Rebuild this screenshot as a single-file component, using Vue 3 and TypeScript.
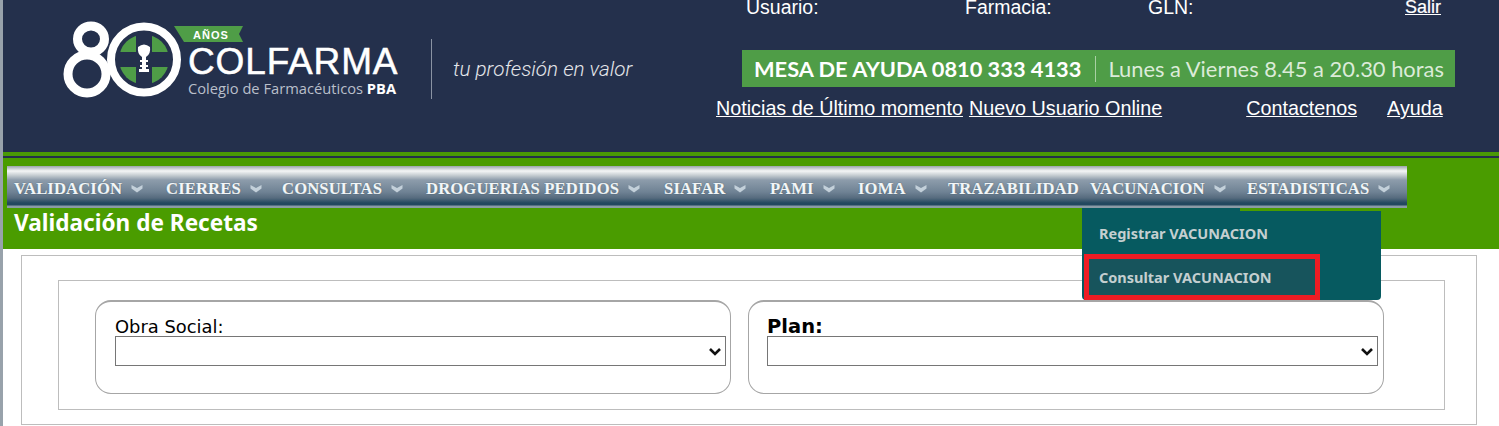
<script setup lang="ts">
interface NavItem {
  label: string
  arrow: boolean
  width: number
}

const navItems: NavItem[] = [
  { label: 'VALIDACIÓN', arrow: true, width: 152 },
  { label: 'CIERRES', arrow: true, width: 116 },
  { label: 'CONSULTAS', arrow: true, width: 144 },
  { label: 'DROGUERIAS PEDIDOS', arrow: true, width: 238 },
  { label: 'SIAFAR', arrow: true, width: 106 },
  { label: 'PAMI', arrow: true, width: 88 },
  { label: 'IOMA', arrow: true, width: 90 },
  { label: 'TRAZABILIDAD', arrow: false, width: 142 },
  { label: 'VACUNACION', arrow: true, width: 157 },
  { label: 'ESTADISTICAS', arrow: true, width: 153 }
]
</script>

<template>
  <div class="page">
    <header class="top">
      <div class="brand">
        <svg class="mark" width="190" height="90" viewBox="60 15 190 90" aria-hidden="true">
          <defs>
            <clipPath id="cross-clip">
              <circle cx="144" cy="59.5" r="25" />
            </clipPath>
          </defs>
          <ellipse cx="91" cy="39" rx="13.5" ry="13" fill="none" stroke="#fff" stroke-width="9" />
          <ellipse cx="87" cy="74" rx="19" ry="19" fill="none" stroke="#fff" stroke-width="9" />
          <circle cx="144" cy="59.5" r="33" fill="#24304c" stroke="#fff" stroke-width="8" />
          <g clip-path="url(#cross-clip)" fill="#4f9d47">
            <rect x="116" y="32" width="20" height="20" />
            <rect x="152" y="32" width="20" height="20" />
            <rect x="116" y="67" width="20" height="20" />
            <rect x="152" y="67" width="20" height="20" />
          </g>
          <path d="M138 47q6-5 12 0q1 7-4 10v3h2v2h-2v3h2v2h-2v2h3v3h-10v-3h3v-2h-2v-2h2v-3h-2v-2h2v-3q-5-3-4-10z" fill="#fff" />
          <path d="M174 26h69l-4 8 4 8h-59z" fill="#4f9d47" />
          <text x="193" y="39" class="anos">AÑOS</text>
        </svg>
        <div class="wordmark">
          <div class="name">COLFARMA</div>
          <div class="sub">Colegio de Farmacéuticos <b>PBA</b></div>
        </div>
        <div class="divider"></div>
        <div class="slogan">tu profesión en valor</div>
      </div>

      <div class="account">
        <div class="user-row">
          <span class="user-usuario">Usuario:</span>
          <span class="user-farmacia">Farmacia:</span>
          <span class="user-gln">GLN:</span>
          <a class="salir">Salir</a>
        </div>
        <div class="help">
          <b>MESA DE AYUDA 0810 333 4133</b>
          <i class="help-sep"></i>
          <span>Lunes a Viernes 8.45 a 20.30 horas</span>
        </div>
        <div class="links">
          <a>Noticias de Último momento</a>
          <a class="link-nuevo">Nuevo Usuario Online</a>
          <a class="link-contacto">Contactenos</a>
          <a class="link-ayuda">Ayuda</a>
        </div>
      </div>
    </header>

    <main class="body">
      <nav class="nav">
        <div
          v-for="item in navItems"
          :key="item.label"
          class="nav-item"
          :style="{ width: item.width + 'px' }"
        >
          <span>{{ item.label }}</span>
          <svg v-if="item.arrow" class="caret" width="12" height="9" viewBox="0 0 12 9">
            <path d="M0.5 1l5.5 3 5.5-3v3.5l-5.5 4-5.5-4z" fill="#c3d0da" />
          </svg>
          <div v-if="item.label === 'VACUNACION'" class="menu">
            <div class="menu-row">Registrar VACUNACION</div>
            <div class="menu-row marked">Consultar VACUNACION</div>
          </div>
        </div>
      </nav>
      <h1 class="title">Validación de Recetas</h1>

      <section class="content">
        <div class="outer">
          <div class="inner">
            <div class="panel panel-obra">
              <label class="lbl-obra">Obra Social:</label>
              <div class="select-box">
                <select></select>
                <svg class="chevron" width="14" height="10" viewBox="0 0 14 10">
                  <path d="M2 2l5 5 5-5" fill="none" stroke="#111" stroke-width="2.6" />
                </svg>
              </div>
            </div>
            <div class="panel panel-plan">
              <label class="lbl-plan">Plan:</label>
              <div class="select-box">
                <select></select>
                <svg class="chevron" width="14" height="10" viewBox="0 0 14 10">
                  <path d="M2 2l5 5 5-5" fill="none" stroke="#111" stroke-width="2.6" />
                </svg>
              </div>
            </div>
          </div>
        </div>
      </section>
    </main>
  </div>
</template>

<style>
html,
body {
  margin: 0;
  overflow: hidden;
  background: #fff;
}
</style>

<style scoped>
.page {
  width: 1499px;
  height: 426px;
  overflow: hidden;
  box-sizing: border-box;
  border-left: 3px solid #98a2ab;
  font-family: "Liberation Sans", Arial, sans-serif;
}

.top {
  height: 152px;
  background: #24304c;
  display: flex;
  color: #fff;
}

.brand {
  width: 713px;
  display: flex;
  align-items: flex-start;
  padding-left: 57px;
  box-sizing: border-box;
}

.mark {
  margin-top: 15px;
  flex: none;
}

.anos {
  font: bold 11px "Liberation Sans", sans-serif;
  letter-spacing: 1px;
  fill: #fff;
}

.wordmark {
  margin-left: -62px;
  margin-top: 43px;
  flex: none;
  width: 212px;
}

.name {
  font-size: 37px;
  line-height: 38px;
  letter-spacing: 0.85px;
  -webkit-text-stroke: 0.5px #fff;
}

.sub {
  font-family: "Open Sans", sans-serif;
  font-size: 14.7px;
  line-height: 14px;
  color: #b9bfca;
  white-space: nowrap;
}

.sub b {
  color: #fff;
}

.divider {
  width: 1px;
  height: 60px;
  margin: 39px 0 0 31px;
  background: #8a93a3;
  flex: none;
}

.slogan {
  margin: 57px 0 0 21px;
  font-family: Roboto, sans-serif;
  font-style: italic;
  font-weight: 300;
  font-size: 20.7px;
  line-height: 24px;
  color: #e4e6ea;
  white-space: nowrap;
}

.account {
  flex: 1;
}

.user-row {
  height: 50px;
  display: flex;
  align-items: flex-start;
  line-height: 14px;
  font-size: 19.5px;
  white-space: nowrap;
}

.user-usuario {
  margin-left: 30px;
  width: 219px;
}

.user-farmacia {
  width: 183px;
}

.user-gln {
  width: 257px;
}

.salir {
  font-size: 18px;
  -webkit-text-stroke: 0.2px #fff;
  text-decoration: underline;
}

.help {
  width: 713px;
  height: 37px;
  margin-left: 26px;
  padding-left: 12px;
  box-sizing: border-box;
  background: #4f9d47;
  display: flex;
  align-items: center;
  font-family: Lato, sans-serif;
  white-space: nowrap;
}

.help b {
  font-size: 21.8px;
}

.help span {
  font-size: 21.9px;
  color: #dcebd9;
}

.help-sep {
  width: 1px;
  height: 26px;
  margin: 0 12px 0 14px;
  background: #a9d0a4;
}

.links {
  display: flex;
  margin-top: 10px;
  font-size: 19.75px;
  line-height: 22px;
  white-space: nowrap;
}

.links a {
  text-decoration: underline;
}

.link-nuevo {
  margin-left: 6px;
}

.link-contacto {
  margin-left: 84px;
}

.link-ayuda {
  margin-left: 30px;
}

.body {
  height: 274px;
  position: relative;
  box-sizing: border-box;
  border-top: 4px solid #4a9a06;
  background: linear-gradient(#24304c 0 2px, #4a9c00 2px, #4a9c00 93px, #fff 93px);
  padding: 10px 0 0 4px;
}

.nav {
  width: 1400px;
  height: 42px;
  display: flex;
  box-sizing: border-box;
  padding-left: 7px;
  background: linear-gradient(#9aa4ab 0, #f4f6f6 5px, #c9d0d4 9px, #8d9cab 14px, #6f8294 26px, #566b7e 32px, #23485f 37px, #23485f 39px, #8b9ba6 40px, #8b9ba6 42px);
}

.nav-item {
  position: relative;
  flex: none;
  display: flex;
  align-items: center;
  gap: 9px;
  padding-top: 3px;
  box-sizing: border-box;
  white-space: nowrap;
  font-family: "Liberation Serif", serif;
  font-weight: bold;
  font-size: 16.6px;
  letter-spacing: 0.15px;
  color: #f2f6f8;
  text-shadow: 0 0 1px #1f3648;
  -webkit-text-stroke: 0.2px #f2f6f8;
}

.menu {
  position: absolute;
  left: -8px;
  top: 100%;
  width: 299px;
  height: 92px;
  box-sizing: border-box;
  padding: 3px 0 0 2px;
  background: linear-gradient(90deg, #065a60 158px, transparent 158px) top left / 100% 3px no-repeat,
    linear-gradient(#065a60, #065a60) 0 3px / 100% 89px no-repeat;
  border-radius: 0 0 4px 4px;
  font-family: "Noto Sans", sans-serif;
  font-size: 14.5px;
  letter-spacing: 0;
  color: #c4cfd0;
  text-shadow: none;
  -webkit-text-stroke: 0;
  z-index: 2;
}

.menu-row {
  height: 43px;
  padding-top: 1px;
  box-sizing: border-box;
  display: flex;
  align-items: center;
  padding-left: 15px;
}

.menu-row.marked {
  width: 236px;
  height: 46px;
  padding: 0 0 1px 10px;
  border: 5px solid #ed1c24;
  background: #17545c;
}

.title {
  margin: 2px 0 0 7px;
  height: 29px;
  font-family: "Noto Sans", sans-serif;
  font-size: 22.6px;
  line-height: 26px;
  font-weight: bold;
  color: #fff;
}

.content {
  margin-top: 16px;
  padding-left: 14px;
}

.outer {
  width: 1456px;
  height: 170px;
  box-sizing: border-box;
  border: 1px solid #bdbdbd;
  padding: 24px 0 0 36px;
}

.inner {
  width: 1387px;
  height: 130px;
  box-sizing: border-box;
  border: 1px solid #bdbdbd;
  padding: 19px 0 0 36px;
  display: flex;
  gap: 17px;
}

.panel {
  width: 636px;
  height: 94px;
  box-sizing: border-box;
  border: 1px solid #a6a6a6;
  border-top-width: 2px;
  border-radius: 16px;
  padding: 14px 0 0 19px;
}

.panel-plan {
  padding-left: 18px;
}

.panel label {
  display: block;
  color: #000;
  height: 20px;
  line-height: 22px;
}

.lbl-obra {
  font-family: "DejaVu Sans", sans-serif;
  font-size: 17.9px;
}

.lbl-plan {
  font-family: "DejaVu Sans", sans-serif;
  font-size: 19.5px;
  font-weight: bold;
}

.select-box {
  position: relative;
  width: 611px;
  height: 30px;
}

select {
  display: block;
  width: 100%;
  height: 100%;
  appearance: none;
  background: #fff;
  border: 1px solid #767676;
  border-radius: 0;
}

.chevron {
  position: absolute;
  right: 4px;
  top: 11px;
}
</style>
